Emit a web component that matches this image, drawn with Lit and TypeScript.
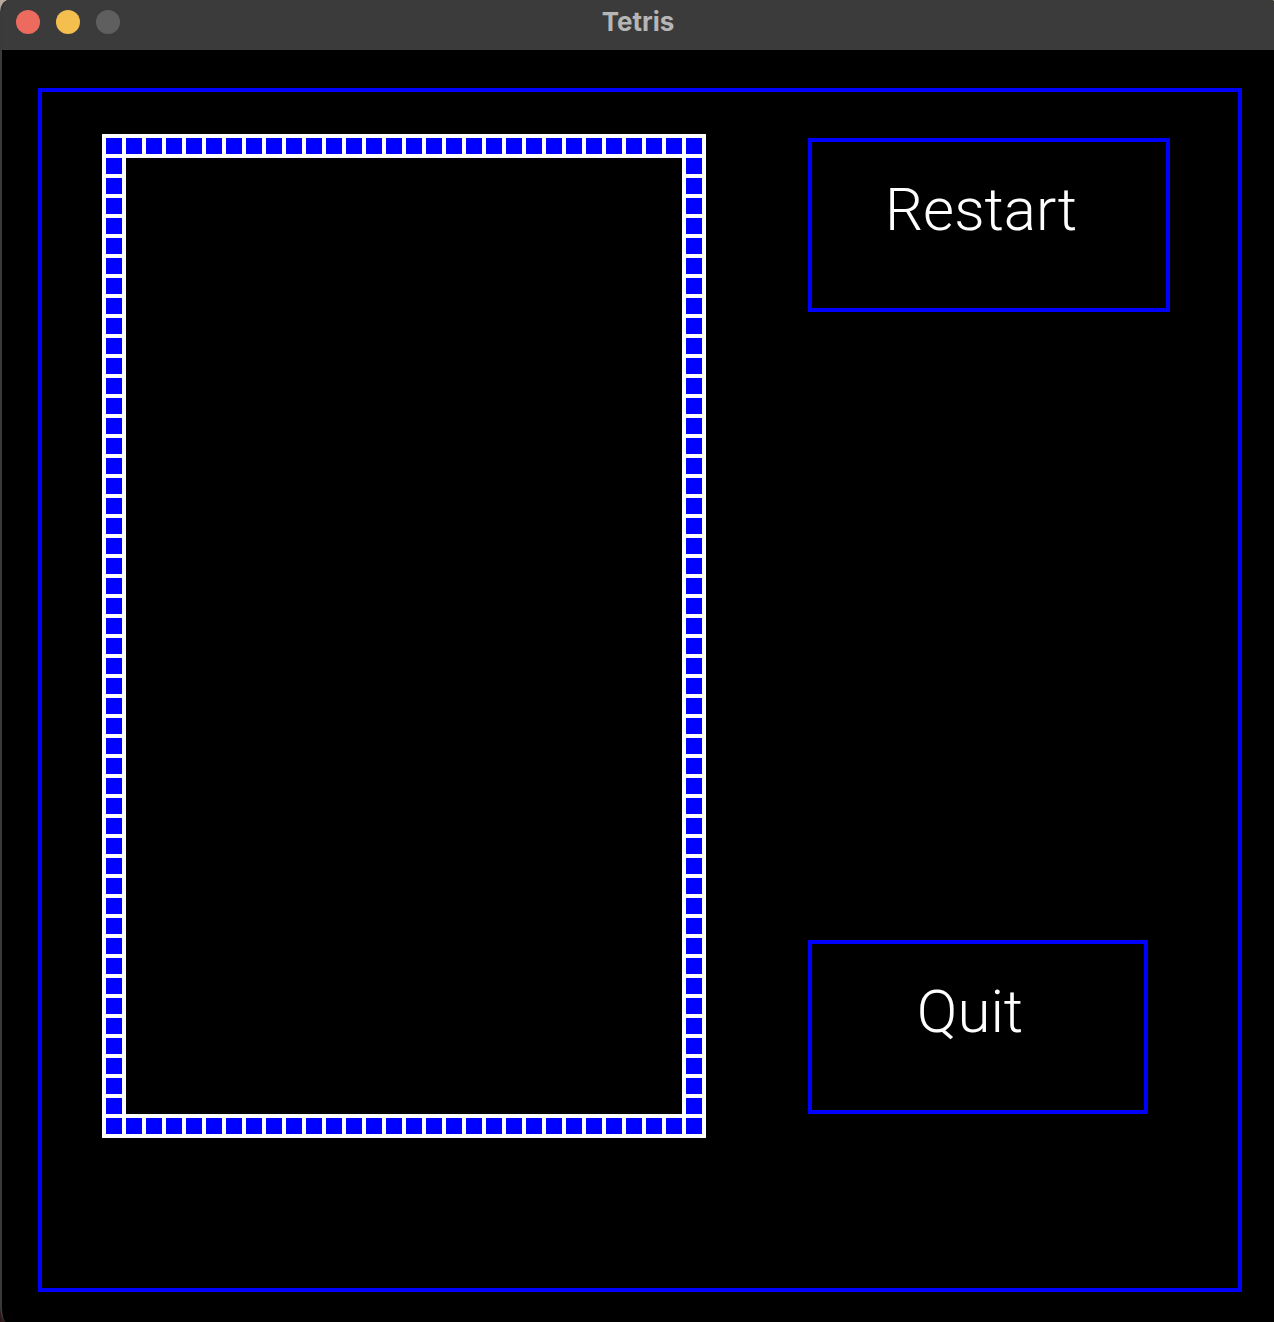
import { LitElement, html, css } from "lit";
import { customElement, property } from "lit/decorators.js";

const COLUMNS = 30;
const ROWS = 50;

/** Positions of the wall blocks that surround the playing well. */
function wallBlocks(columns: number, rows: number): Array<[number, number]> {
  const blocks: Array<[number, number]> = [];
  for (let row = 1; row <= rows; row++) {
    for (let column = 1; column <= columns; column++) {
      if (row === 1 || row === rows || column === 1 || column === columns) {
        blocks.push([row, column]);
      }
    }
  }
  return blocks;
}

@customElement("title-bar")
export class TitleBar extends LitElement {
  @property() heading = "";

  static styles = css`
    :host {
      display: block;
    }
    .bar {
      display: grid;
      grid-template-columns: 1fr auto 1fr;
      align-items: center;
      height: 50px;
      box-sizing: border-box;
      padding: 0 14px 6px;
      background: #3b3b3b;
    }
    .lights {
      display: flex;
      gap: 16px;
    }
    .light {
      width: 24px;
      height: 24px;
      padding: 0;
      border: 0;
      border-radius: 50%;
    }
    .close {
      background: #ed6a5e;
    }
    .minimize {
      background: #f5bf4f;
    }
    .zoom {
      background: #5f5f5f;
    }
    .title {
      margin: 0;
      color: #b6b6b6;
      font: 700 26px/32px Inter, "Liberation Sans", sans-serif;
    }
  `;

  render() {
    return html`
      <header class="bar">
        <div class="lights">
          <button class="light close" aria-label="Close"></button>
          <button class="light minimize" aria-label="Minimize"></button>
          <button class="light zoom" aria-label="Zoom" disabled></button>
        </div>
        <h1 class="title">${this.heading}</h1>
      </header>
    `;
  }
}

@customElement("game-board")
export class GameBoard extends LitElement {
  static styles = css`
    :host {
      display: block;
      flex: none;
    }
    .board {
      display: grid;
      grid-template-columns: repeat(30, 16px);
      grid-template-rows: repeat(50, 16px);
      gap: 4px;
      padding: 4px;
      background: #fff;
    }
    .block {
      background: #00f;
    }
    .well {
      grid-area: 2 / 2 / -2 / -2;
      background: #000;
    }
  `;

  render() {
    return html`
      <div class="board">
        ${wallBlocks(COLUMNS, ROWS).map(
          ([row, column]) =>
            html`<div class="block" style="grid-area: ${row} / ${column}"></div>`
        )}
        <div class="well"></div>
      </div>
    `;
  }
}

@customElement("app-root")
export class AppRoot extends LitElement {
  static styles = css`
    :host {
      display: block;
      background: linear-gradient(#b5aa9c, #2a1616);
    }
    .window {
      display: flex;
      flex-direction: column;
      box-sizing: border-box;
      min-height: 100vh;
      overflow: hidden;
      border-left: 2px solid #3a3a3a;
      border-radius: 9px 3px 0 6px / 12px 3px 0 16px;
      background: #000;
    }
    .content {
      flex: 1;
      display: flex;
      padding: 38px 32px 30px 36px;
    }
    .frame {
      flex: 1;
      display: flex;
      gap: 102px;
      padding: 42px 60px;
      border: 4px solid #00f;
    }
    .side {
      flex: 1;
      align-self: flex-start;
      display: flex;
      flex-direction: column;
      justify-content: space-between;
      box-sizing: border-box;
      height: 1004px;
      padding: 4px 0 24px;
    }
    .action {
      box-sizing: border-box;
      height: 174px;
      padding: 0 16px 30px 0;
      border: 4px solid #00f;
      border-radius: 0;
      background: #000;
      color: #fff;
      font: 300 60px/72px Roboto, "Liberation Sans", sans-serif;
    }
    .restart {
      width: 362px;
    }
    .quit {
      width: 340px;
    }
  `;

  render() {
    return html`
      <div class="window">
        <title-bar heading="Tetris"></title-bar>
        <main class="content">
          <div class="frame">
            <game-board></game-board>
            <nav class="side">
              <button class="action restart">Restart</button>
              <button class="action quit">Quit</button>
            </nav>
          </div>
        </main>
      </div>
    `;
  }
}
